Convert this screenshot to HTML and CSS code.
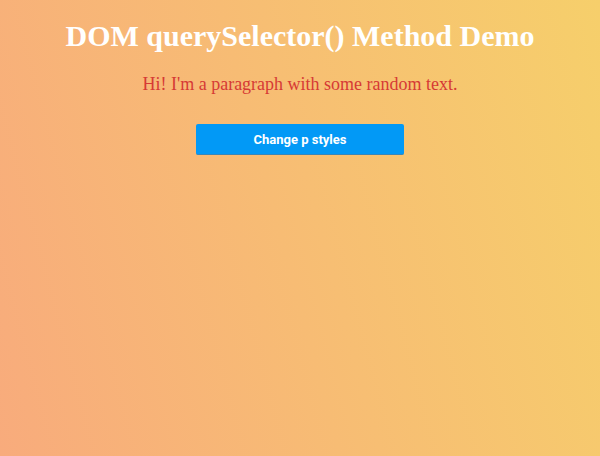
FILE: index.html
```html
<!DOCTYPE html>
<html>
<head>
<meta charset="utf-8">
<link rel="stylesheet" href="styles.css">
</head>
<body>
<main class="demo">
  <h1 class="title">DOM querySelector() Method Demo</h1>
  <p class="text">Hi! I'm a paragraph with some random text.</p>
  <button class="btn">Change p styles</button>
</main>
</body>
</html>
```
FILE: styles.css
```css
html, body {
  margin: 0;
  height: 100%;
}
body {
  background: linear-gradient(75deg, #f8ab7c 0%, #f6cf6b 100%);
  font-family: "Liberation Serif", serif;
}
.demo {
  display: flex;
  flex-direction: column;
  align-items: center;
  padding-top: 18px;
}
.title {
  margin: 0;
  font-size: 30px;
  line-height: 35px;
  font-weight: bold;
  color: #fff;
}
.text {
  margin: 20px 0 0;
  font-size: 18px;
  line-height: 22px;
  color: #d63a35;
}
.btn {
  margin-top: 29px;
  width: 208px;
  height: 31px;
  background: #0299f6;
  border: none;
  border-bottom: 1px solid #3a86b8;
  border-radius: 2px;
  color: #fff;
  font-family: Roboto, "Liberation Sans", sans-serif;
  font-weight: bold;
  font-size: 13px;
  padding: 0;
}
```
